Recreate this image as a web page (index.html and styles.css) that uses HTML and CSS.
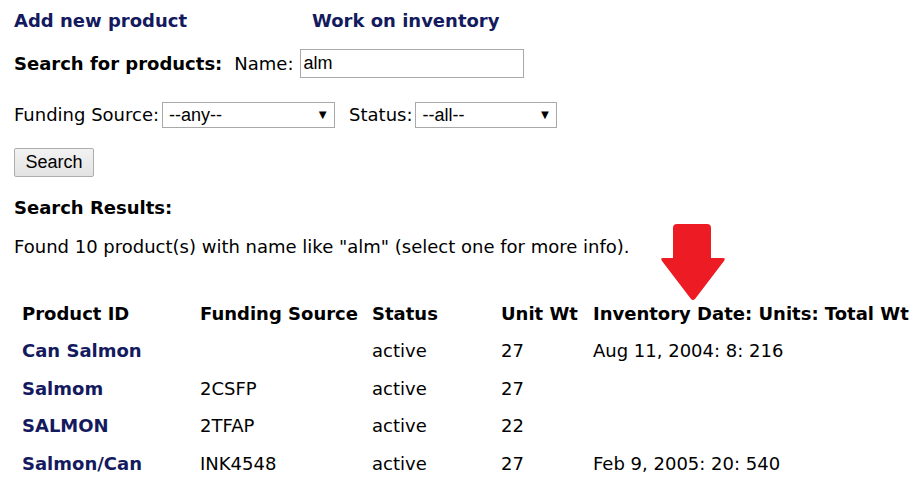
FILE: index.html
```html
<!DOCTYPE html>
<html>
<head>
<meta charset="utf-8">
<link rel="stylesheet" href="styles.css">
</head>
<body>
<div class="page">
  <div class="nav">
    <a class="nav-link" href="#">Add new product</a>
    <a class="nav-link nav-link-2" href="#">Work on inventory</a>
  </div>
  <div class="row row-search">
    <span class="label-bold">Search for products:</span>
    <span class="label">Name:</span>
    <input class="text-input" type="text" value="alm">
  </div>
  <div class="row row-filters">
    <span class="label-tight">Funding Source:</span>
    <span class="select select-fund">--any--</span>
    <span class="label-tight label-status">Status:</span>
    <span class="select select-status">--all--</span>
  </div>
  <div class="row row-button">
    <button class="btn" type="button">Search</button>
  </div>
  <div class="results-title">Search Results:</div>
  <div class="found">Found 10 product(s) with name like "alm" (select one for more info).
    <svg class="arrow" width="68" height="78" viewBox="0 0 68 78">
      <path d="M18 0 H48 Q52 0 52 4 V34 H64 Q67 34 65 37 L36 75 Q34 77 32 75 L3 37 Q1 34 4 34 H14 V4 Q14 0 18 0 Z" fill="#ed1c24"/>
    </svg>
  </div>
  <table class="grid">
    <thead>
      <tr><th class="c1">Product ID</th><th class="c2">Funding Source</th><th class="c3">Status</th><th class="c4">Unit Wt</th><th class="c5">Inventory Date: Units: Total Wt</th></tr>
    </thead>
    <tbody>
      <tr><td><a class="prod" href="#">Can Salmon</a></td><td></td><td>active</td><td>27</td><td>Aug 11, 2004: 8: 216</td></tr>
      <tr><td><a class="prod" href="#">Salmom</a></td><td>2CSFP</td><td>active</td><td>27</td><td></td></tr>
      <tr><td><a class="prod" href="#">SALMON</a></td><td>2TFAP</td><td>active</td><td>22</td><td></td></tr>
      <tr><td><a class="prod" href="#">Salmon/Can</a></td><td>INK4548</td><td>active</td><td>27</td><td>Feb 9, 2005: 20: 540</td></tr>
    </tbody>
  </table>
</div>
</body>
</html>
```
FILE: styles.css
```css
html, body {
  margin: 0;
  padding: 0;
  background: #fff;
}
body {
  font-family: "DejaVu Sans", Verdana, sans-serif;
  font-size: 18px;
  line-height: 22px;
  color: #000;
  overflow: hidden;
}
.page {
  padding: 9px 0 0 14px;
}
.nav {
  display: flex;
  height: 24px;
  align-items: center;
}
.nav-link {
  color: #141a5e;
  font-weight: bold;
  text-decoration: none;
}
.nav-link-2 {
  margin-left: 125px;
}
.row {
  display: flex;
  align-items: center;
}
.row-search {
  margin-top: 16px;
  height: 29px;
}
.label-bold {
  font-weight: bold;
}
.label {
  margin-left: 12px;
  margin-right: 7px;
}
.text-input {
  box-sizing: border-box;
  width: 224px;
  height: 29px;
  border: 1px solid #a9a9a9;
  padding: 0 2px;
  font-family: "Liberation Sans", Arial, sans-serif;
  font-size: 18px;
  color: #000;
  outline: none;
}
.row-filters {
  margin-top: 24px;
  height: 26px;
}
.label-tight {
  margin-right: 3px;
}
.label-status {
  margin-left: 14px;
}
.select {
  position: relative;
  box-sizing: border-box;
  height: 26px;
  border: 1px solid #a9a9a9;
  font-family: "Liberation Sans", Arial, sans-serif;
  font-size: 18px;
  line-height: 24px;
  padding-left: 6px;
  display: inline-block;
}
.select::after {
  content: "\25BC";
  position: absolute;
  right: 5px;
  top: 0;
  font-size: 13px;
  color: #000;
}
.select-fund {
  width: 173px;
}
.select-status {
  width: 142px;
}
.row-button {
  margin-top: 20px;
}
.btn {
  box-sizing: border-box;
  width: 80px;
  height: 29px;
  border: 1px solid #adadad;
  border-radius: 2px;
  background: linear-gradient(#f2f2f2, #e3e3e3);
  font-family: "Liberation Sans", Arial, sans-serif;
  font-size: 18px;
  color: #000;
  padding: 0;
}
.results-title {
  font-weight: bold;
  margin-top: 20px;
}
.found {
  position: relative;
  margin-top: 17px;
}
.arrow {
  position: absolute;
  left: 645px;
  top: -12px;
}
.grid {
  margin-top: 37px;
  margin-left: 0;
  border-collapse: collapse;
  table-layout: fixed;
}
.grid th, .grid td {
  text-align: left;
  padding: 0 0 0 8px;
  height: 37.5px;
  white-space: nowrap;
}
.grid th {
  font-weight: bold;
}
.c1 { width: 170px; }
.c2 { width: 164px; }
.c3 { width: 121px; }
.c4 { width: 84px; }
.c5 { width: 320px; }
.prod {
  color: #141a5e;
  font-weight: bold;
  text-decoration: none;
}
```
